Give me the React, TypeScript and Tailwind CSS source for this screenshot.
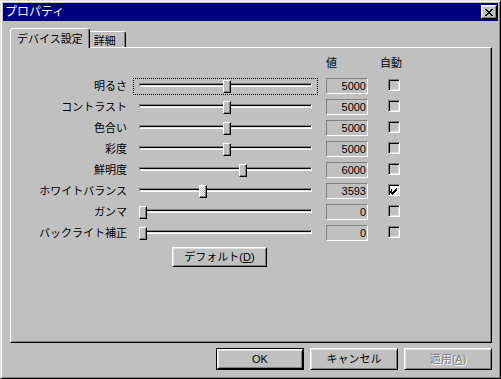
const rows = [
  { label: "明るさ", value: "5000", pos: 84, auto: false, focus: true },
  { label: "コントラスト", value: "5000", pos: 84, auto: false },
  { label: "色合い", value: "5000", pos: 84, auto: false },
  { label: "彩度", value: "5000", pos: 84, auto: false },
  { label: "鮮明度", value: "6000", pos: 100, auto: false },
  { label: "ホワイトバランス", value: "3593", pos: 60, auto: true },
  { label: "ガンマ", value: "0", pos: 0, auto: false },
  { label: "バックライト補正", value: "0", pos: 0, auto: false },
];

const font = { fontFamily: '"Liberation Sans", "Noto Sans CJK JP", sans-serif' };

function Slider({ pos, focus, disabled }: { pos: number; focus?: boolean; disabled?: boolean }) {
  return (
    <div
      className={`relative h-[17px] w-[185px] border border-dotted ${focus ? "border-black" : "border-transparent"}`}
    >
      <div className="absolute left-[5px] right-[5px] top-[4px] h-[4px] border border-t-[#808080] border-l-[#808080] border-b-white border-r-white bg-[#dfdfdf] shadow-[inset_0_1px_0_#000]" />
      <div
        className={`absolute top-[1px] h-[13px] w-[8px] border border-t-white border-l-white border-b-black border-r-black shadow-[inset_-1px_-1px_0_#808080] ${
          disabled
            ? "bg-[repeating-conic-gradient(#ffffff_0%_25%,#c0c0c0_0%_50%)] bg-[length:2px_2px]"
            : "bg-[#c0c0c0]"
        }`}
        style={{ left: 5 + pos }}
      />
    </div>
  );
}

function CheckBox({ checked }: { checked: boolean }) {
  return (
    <div
      className={`mt-px h-[12px] w-[12px] border border-t-[#808080] border-l-[#808080] border-b-white border-r-white shadow-[inset_1px_1px_0_#000,inset_-1px_-1px_0_#dfdfdf] ${
        checked ? "bg-white" : "bg-[#c0c0c0]"
      }`}
    >
      {checked && (
        <svg width="10" height="10" viewBox="0 0 10 10" shapeRendering="crispEdges">
          <path d="M2 4h1v3h1v-1h1v-1h1v-1h1v-1h1v3h-1v1h-1v1h-1v1h-1v1h-1v-1h-1v-1h-1z" fill="#000" />
        </svg>
      )}
    </div>
  );
}

function Button({
  children,
  def,
  disabled,
  className = "",
}: {
  children: React.ReactNode;
  def?: boolean;
  disabled?: boolean;
  className?: string;
}) {
  const face = (
    <div
      className={`flex h-full w-full items-center justify-center border border-t-white border-l-white border-b-black border-r-black bg-[#c0c0c0] text-[11px] shadow-[inset_1px_1px_0_#dfdfdf,inset_-1px_-1px_0_#808080] ${
        disabled ? "text-[#808080] [text-shadow:1px_1px_0_#fff]" : "text-black"
      }`}
    >
      {children}
    </div>
  );
  if (def) {
    return <div className={`border border-black ${className}`}>{face}</div>;
  }
  return <div className={className}>{face}</div>;
}

export default function App() {
  return (
    <div
      className="flex h-[379px] w-[501px] flex-col border border-t-[#dfdfdf] border-l-[#dfdfdf] border-b-black border-r-black bg-[#c0c0c0] p-[2px] shadow-[inset_1px_1px_0_#fff,inset_-1px_-1px_0_#808080]"
      style={font}
    >
      {/* タイトルバー */}
      <div className="flex h-[18px] items-center justify-between bg-[#000080] pl-[2px] pr-[1px]">
        <span className="text-[12px] leading-none text-white">プロパティ</span>
        <div className="flex h-[14px] w-[16px] items-center justify-center border border-t-white border-l-white border-b-black border-r-black bg-[#c0c0c0] shadow-[inset_-1px_-1px_0_#808080,inset_1px_1px_0_#dfdfdf]">
          <svg width="8" height="7" viewBox="0 0 8 7" shapeRendering="crispEdges">
            <path
              d="M0 0h2v1h-2zM6 0h2v1h-2zM1 1h2v1h-2zM5 1h2v1h-2zM2 2h4v1h-4zM3 3h2v1h-2zM2 4h4v1h-4zM1 5h2v1h-2zM5 5h2v1h-2zM0 6h2v1h-2zM6 6h2v1h-2z"
              fill="#000"
            />
          </svg>
        </div>
      </div>

      <div className="flex flex-col pl-[7px] pt-[7px]">
        {/* タブ */}
        <div className="flex h-[19px] items-end">
          <div className="relative z-10 -mb-px flex h-[20px] items-start rounded-t-[3px] border-l border-t border-r border-l-white border-t-white border-r-black bg-[#c0c0c0] pl-[6px] pr-[6px] pt-[2px] text-[11px] shadow-[inset_-1px_0_0_#808080]">
            デバイス設定
          </div>
          <div className="flex h-[16px] items-start rounded-tr-[3px] border-t border-r border-t-white border-r-black pl-[4px] pr-[9px] pt-[1px] text-[11px] shadow-[inset_-1px_0_0_#808080]">
            詳細
          </div>
        </div>

        {/* タブシート */}
        <div className="flex h-[296px] w-[482px] flex-col border border-t-white border-l-white border-b-black border-r-black pt-[8px] shadow-[inset_-1px_-1px_0_#808080]">
          <div className="flex h-[22px] text-[11px] leading-[14px]">
            <span className="ml-[315px] w-[54px]">値</span>
            <span>自動</span>
          </div>
          {rows.map((r) => (
            <div key={r.label} className="flex h-[21px] items-start text-[11px]">
              <div className="w-[116px] pt-[1px] text-right leading-[14px]">{r.label}</div>
              <div className="ml-[6px]">
                <Slider pos={r.pos} focus={r.focus} disabled={r.auto} />
              </div>
              <div className="ml-[8px] flex h-[16px] w-[42px] items-center justify-end border border-t-[#808080] border-l-[#808080] border-b-white border-r-white pr-[1px] leading-none">
                {r.value}
              </div>
              <div className="ml-[20px]">
                <CheckBox checked={r.auto} />
              </div>
            </div>
          ))}
          <Button className="ml-[161px] mt-px h-[20px] w-[95px]">
            デフォルト(<span className="underline">D</span>)
          </Button>
        </div>

        {/* ボタン */}
        <div className="mt-[5px] flex w-[482px] justify-end gap-[6px]">
          <Button def className="h-[22px] w-[88px]">
            OK
          </Button>
          <Button className="h-[22px] w-[88px]">キャンセル</Button>
          <Button disabled className="h-[22px] w-[88px]">
            適用(<span className="underline">A</span>)
          </Button>
        </div>
      </div>
    </div>
  );
}
